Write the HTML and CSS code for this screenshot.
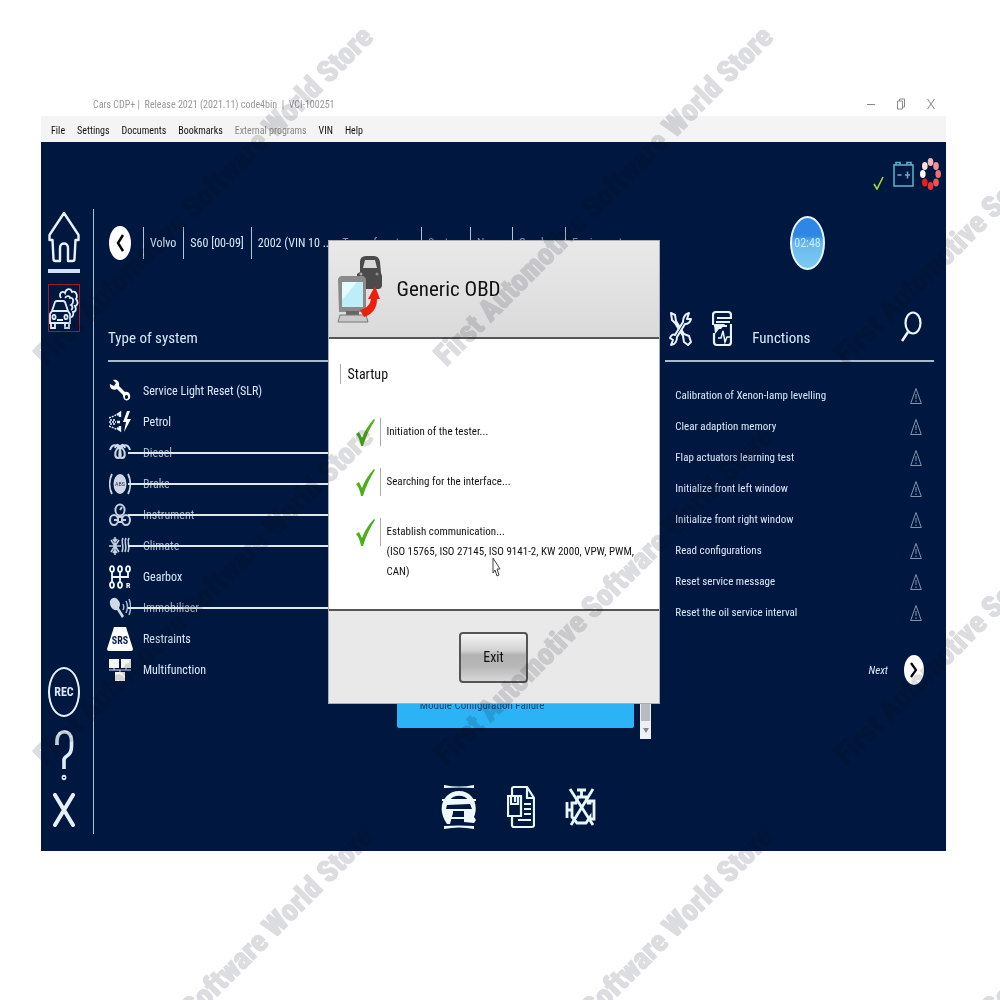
FILE: index.html
```html
<!DOCTYPE html>
<html lang="en">
<head>
  <meta charset="UTF-8">
  <meta name="viewport" content="width=device-width, initial-scale=1.0">
  <title>Cars CDP+</title>
  <link rel="stylesheet" href="styles.css">
</head>
<body>
  <div class="window">
    <header class="titlebar">
      <span class="title">Cars CDP+ |&nbsp; Release 2021 (2021.11) code4bin &nbsp;|&nbsp; VCI-100251</span>
      <div class="win-buttons">
        <button aria-label="Minimize"><svg width="8" height="12" viewBox="0 0 8 12"><path d="M0 6.500h8"/></svg></button>
        <button aria-label="Restore"><svg width="8" height="12" viewBox="0 0 8 12"><path d="M.5 3h5v8h-5zM2.500 3V1h5v8h-2"/></svg></button>
        <button aria-label="Close"><svg width="8" height="12" viewBox="0 0 8 12"><path d="M.5 1l7 10M7.500 1l-7 10"/></svg></button>
      </div>
    </header>

    <nav class="menubar">
      <a href="#">File</a>
      <a href="#">Settings</a>
      <a href="#">Documents</a>
      <a href="#">Bookmarks</a>
      <a href="#" class="off">External programs</a>
      <a href="#">VIN</a>
      <a href="#">Help</a>
    </nav>

    <main class="app">
      <div class="status">
        <svg class="ok" width="11" height="14" viewBox="0 0 11 14"><path d="M1 8l3 5L10 1" fill="none" stroke="#a4d63c" stroke-width="1.600"/></svg>
        <svg width="21" height="26" viewBox="0 0 21 26" fill="none" stroke="#5fb4cc" stroke-width="1.500"><path d="M1 4h19v21H1zM3 4V1.500h4V4M14 4V1.500h4V4M4.500 14h4M12 14h5M14.500 10.500v7"/></svg>
        <svg width="21" height="32" viewBox="0 0 21 32">
          <ellipse cx="10.500" cy="4" rx="2.800" ry="4" fill="#f6b5b5"/>
          <ellipse cx="16" cy="8" rx="2.800" ry="4" fill="#f19393"/>
          <ellipse cx="18.200" cy="16" rx="2.800" ry="4" fill="#ee7070"/>
          <ellipse cx="16" cy="24.500" rx="2.800" ry="4" fill="#ec5555"/>
          <ellipse cx="10.500" cy="28" rx="2.800" ry="4" fill="#ee3333"/>
          <ellipse cx="4.800" cy="24.500" rx="2.800" ry="4" fill="#f01c1c"/>
          <ellipse cx="2.800" cy="16" rx="2.800" ry="4" fill="#fff"/>
          <ellipse cx="4.800" cy="8" rx="2.800" ry="4" fill="#fbdede"/>
        </svg>
      </div>

      <div class="workspace">
        <aside class="rail">
          <button class="home" aria-label="Home"><svg width="32" height="52" viewBox="0 0 32 52" fill="none" stroke="#e8f3ff" stroke-width="2.400" stroke-linejoin="round" stroke-linecap="round"><path d="M16 2L1.500 24v5H4.500l1 19q0 2 2 2h4.500V37c0-6 8-6 8 0v13h4.500q2 0 2-2l1-19h3v-5z"/></svg></button>
          <button class="car" aria-label="Vehicle"><svg width="30" height="46" viewBox="0 0 30 46" fill="none" stroke="#dfeeff" stroke-width="1.800"><path d="M1 38V29l2-3 3-9q1-1 2-1h6q1 0 2 1l3 9 2 3v9zM3 26h16M2 38v5h4v-5M16 38v5h4v-5M8 35h6"/><ellipse cx="5" cy="32" rx="1.600" ry="2.200"/><ellipse cx="17" cy="32" rx="1.600" ry="2.200"/><path d="M12 13c-3-5 2-8 4-5 1-5 6-5 7-1 4-2 6 4 4 7 3 3 1 7-1 7 2 4 0 6-2 6 1 3-1 6-3 5M16 13c2-3 5-2 5 0 4-1 4 5 1 7 2 1 2 4 0 5"/></svg></button>
          <div class="rail-bottom">
            <button class="rec">REC</button>
            <button aria-label="Help"><svg width="20" height="52" viewBox="0 0 20 52" fill="none" stroke="#dfeefa" stroke-width="3.600"><path d="M3 16V11C4 0 17 0 17.500 11v6q0 7-4 9.500T10 32v8"/><ellipse cx="10" cy="48.500" rx=".6" ry="1" /></svg></button>
            <button aria-label="Exit"><svg width="22" height="34" viewBox="0 0 22 34" fill="none" stroke="#e4f1fb" stroke-width="4" stroke-linecap="round"><path d="M2 2l18 30M20 2L2 32"/></svg></button>
          </div>
        </aside>

        <div class="content">
          <div class="crumbs">
            <button class="round back" aria-label="Back"><svg width="8" height="18" viewBox="0 0 8 18"><path d="M7 1L2 9l5 8" fill="none" stroke="#000" stroke-width="2.400"/></svg></button>
            <span>Volvo</span>
            <span>S60 [00-09]</span>
            <span>2002 (VIN 10 ...</span>
            <span class="dim first">Type of system</span>
            <span class="dim">System</span>
            <span class="dim">Name</span>
            <span class="dim">Gearbox</span>
            <span class="dim">Equipment</span>
            <div class="clock">02:48</div>
          </div>

          <div class="columns">
            <section class="systems">
              <h2>Type of system</h2>
              <ul>
                <li><button><svg viewBox="0 0 22 24"><path d="M1 5l4 2 2-3-3-3c4-1 7 2 6 6l6 6c4-1 6 3 5 6s-5 3-6 1-1-3-1-4L8 10C4 12 0 9 1 5z" fill="#fff"/><ellipse cx="17.500" cy="18" rx="1.700" ry="2" fill="#001840"/></svg>Service Light Reset (SLR)</button></li>
                <li><button><svg viewBox="0 0 22 24" fill="none" stroke="#e8f5ff" stroke-width="1.800"><path d="M0 8l7-3M0 12h7M0 16l7 3M1 10h5M1 14h5" stroke-dasharray="2 1" stroke-width="1.400"/><path d="M8 5l3-2v4M8 12h3M8 18l3 2v-4" stroke-width="2.400"/><path d="M18 1l-4 11h3l-2 10 7-13h-4l3-8z" fill="#fff" stroke="none"/></svg>Petrol</button></li>
                <li class="disabled"><button disabled><svg viewBox="0 0 22 24" fill="none" stroke="#ccd6e4" stroke-width="2"><path d="M1 9c2-6 6-6 9-2 3 5 2 10-1 10s-4-5-1-9 3-4 6 0 2 9-1 9-4-5-1-10c3-4 7-4 9 2M6 7c1-4 3-4 5-1 2-3 4-3 5 1"/></svg>Diesel</button></li>
                <li class="disabled"><button disabled><svg viewBox="0 0 22 24"><path d="M3 2c-3 6-3 14 0 20M19 2c3 6 3 14 0 20" fill="none" stroke="#ccd6e4" stroke-width="1.800"/><ellipse cx="11" cy="12" rx="6.500" ry="10" fill="#cfd7e6"/><text x="11" y="14" font-size="6" text-anchor="middle" fill="#26365a">ABS</text></svg>Brake</button></li>
                <li class="disabled"><button disabled><svg viewBox="0 0 22 24" fill="none" stroke="#c5cfdf" stroke-width="2"><ellipse cx="11" cy="7" rx="4.600" ry="5.500"/><ellipse cx="5" cy="17" rx="4" ry="5"/><ellipse cx="17" cy="17" rx="4" ry="5"/><path d="M11 7l2-3M5 17h3M17 17h-3M9 14h4v5H9z"/></svg>Instrument</button></li>
                <li class="disabled"><button disabled><svg viewBox="0 0 22 24" fill="none" stroke="#c5cfdf" stroke-width="1.600"><path d="M6 3v18M0 12h12M2 6l8 12M10 6L2 18M4 5l2 3 2-3M4 19l2-3 2 3"/><path d="M14 4c-3 5 2 6-1 14M17 4c-3 5 2 6-1 14M20 4c-3 5 2 6-1 14"/></svg>Climate</button></li>
                <li><button><svg viewBox="0 0 22 24" fill="none" stroke="#f0f7ff" stroke-width="1.800"><path d="M3 6v12M11 6v12M19 6v6H3"/><g fill="#001840"><ellipse cx="3" cy="4" rx="2" ry="2.800"/><ellipse cx="11" cy="4" rx="2" ry="2.800"/><ellipse cx="19" cy="4" rx="2" ry="2.800"/><ellipse cx="3" cy="20" rx="2" ry="2.800"/><ellipse cx="11" cy="20" rx="2" ry="2.800"/></g><text x="17" y="23" font-size="8" font-weight="bold" fill="#fff" stroke="none">R</text></svg>Gearbox</button></li>
                <li class="disabled"><button disabled><svg viewBox="0 0 22 24"><path d="M1 5c2-4 6-4 8-1 3 3 2 6 1 8l5 8-2 2-5-8c-4 1-8-4-7-9z" fill="#cfd8e5"/><path d="M14 8c1 2 1 4 0 6M17 5c2 4 2 8 0 12M20 3c2 5 2 11 0 16" fill="none" stroke="#aab8cf" stroke-width="1.500"/></svg>Immobiliser</button></li>
                <li><button><svg viewBox="0 0 22 24" overflow="visible"><path d="M5 0h12l7 22q0 2-2 2H0q-2 0-2-2z" fill="#fff"/><text x="11" y="17" font-size="10" font-weight="bold" text-anchor="middle" fill="#001840">SRS</text></svg>Restraints</button></li>
                <li><button><svg viewBox="0 0 22 24"><path d="M0 1h10v9H0zM12 1h10v9H12zM6 14h10v9H6z" fill="#f3f5ee"/><path d="M0 12h22M11 12v4M5 10v2M17 10v2" stroke="#e7edf5" fill="none"/></svg>Multifunction</button></li>
              </ul>
            </section>

            <section class="modules">
              <div class="module-list">
                <button class="module">Module Configuration Failure</button>
                <div class="scroll"><span></span><svg width="6" height="5" viewBox="0 0 6 5"><path d="M0 0h6L3 5z" fill="#888"/></svg></div>
              </div>
              <div class="tools">
                <button aria-label="Scan vehicle"><svg width="36" height="44" viewBox="0 0 36 44" fill="#eef9fd"><path d="M3 0q15 3 30 0v3q-15-1-30 0zM3 41q15-1 30 0v3q-15-3-30 0z"/><path d="M6 39C-6 22 4 6 18 6s20 14 15 26l2 3-2 3-10-1V26H12v2L9 39zM8 16h20C24 9 12 9 8 16zM6 20l-1 4h26l-2-5z" fill-rule="evenodd"/><path d="M10 32h14v2H10zM1 14h34v2H1z"/></svg></button>
                <button aria-label="Save report"><svg width="28" height="44" viewBox="0 0 28 44" fill="none" stroke="#e8f7fb" stroke-width="2.200"><path d="M5 11V4q0-2 2-2h13l7 11v27q0 2-2 2H7q-2 0-2-2v-8M20 2v11h7"/><path d="M1 11h13v20H1zM4 11v8h7v-8M8 12v5M17 19h7M17 24h7M17 29h7M11 35h13"/></svg></button>
                <button aria-label="Clear fault codes"><svg width="32" height="40" viewBox="0 0 32 40" fill="none" stroke="#e8f7fb" stroke-width="2.800"><path d="M12 3h9M16.500 3v7M2 15v16M2 23h4M7 16h4l2-6h8l2 6h2v-2h4v18h-4v-2l-4 6H12l-5-6z"/><path d="M5 2l23 36M28 2L6 38"/></svg></button>
              </div>
            </section>

            <section class="functions">
              <div class="fn-head">
                <svg width="24" height="36" viewBox="0 0 24 36" fill="none" stroke="#e8f3ff" stroke-width="2" stroke-linejoin="round"><path d="M2 2l4 2 1 6 8 13 5 2 2 6-3 3-4-3-1-6L6 12 3 9z"/><path d="M22 8c-1 4-3 5-6 5L8 26c0 4-2 8-6 8l2-5-3-2c1-3 3-4 5-3l8-13c0-5 2-8 6-9l-2 6z" fill="#001840"/></svg>
                <svg width="20" height="36" viewBox="0 0 20 36" fill="none" stroke="#e8f3ff" stroke-width="2.200"><path d="M1 14V4q0-3 3-3h12q3 0 3 3v3H5M4 11h14M2 15h13M2 22v9q0 3 3 3h11q3 0 3-3V13"/><path d="M6 27h3l2-7 2 11 2-5h3" stroke-width="1.500"/><path d="M2 13h11l-4 5H7l-4 5z" fill="#e8f3ff" stroke="none"/></svg>
                <h2>Functions</h2>
                <button aria-label="Search"><svg width="21" height="32" viewBox="0 0 21 32" fill="none" stroke="#eef6ff" stroke-width="2.200"><ellipse cx="12" cy="12" rx="7.500" ry="10.500"/><path d="M7 21L1 30" stroke-width="2.600"/></svg></button>
              </div>
              <ul>
                <li><a href="#">Calibration of Xenon-lamp levelling</a><svg viewBox="0 0 12 18"><path d="M6 1.500L11.300 16.500H.7zM6 7v5M6 13.500v1.500"/></svg></li>
                <li><a href="#">Clear adaption memory</a><svg viewBox="0 0 12 18"><path d="M6 1.500L11.300 16.500H.7zM6 7v5M6 13.500v1.500"/></svg></li>
                <li><a href="#">Flap actuators learning test</a><svg viewBox="0 0 12 18"><path d="M6 1.500L11.300 16.500H.7zM6 7v5M6 13.500v1.500"/></svg></li>
                <li><a href="#">Initialize front left window</a><svg viewBox="0 0 12 18"><path d="M6 1.500L11.300 16.500H.7zM6 7v5M6 13.500v1.500"/></svg></li>
                <li><a href="#">Initialize front right window</a><svg viewBox="0 0 12 18"><path d="M6 1.500L11.300 16.500H.7zM6 7v5M6 13.500v1.500"/></svg></li>
                <li><a href="#">Read configurations</a><svg viewBox="0 0 12 18"><path d="M6 1.500L11.300 16.500H.7zM6 7v5M6 13.500v1.500"/></svg></li>
                <li><a href="#">Reset service message</a><svg viewBox="0 0 12 18"><path d="M6 1.500L11.300 16.500H.7zM6 7v5M6 13.500v1.500"/></svg></li>
                <li><a href="#">Reset the oil service interval</a><svg viewBox="0 0 12 18"><path d="M6 1.500L11.300 16.500H.7zM6 7v5M6 13.500v1.500"/></svg></li>
              </ul>
              <div class="next">
                <label for="next">Next</label>
                <button class="round" id="next"><svg width="8" height="16" viewBox="0 0 8 16"><path d="M1 1l5 7-5 7" fill="none" stroke="#000" stroke-width="2.200"/></svg></button>
              </div>
            </section>
          </div>
        </div>
      </div>

      <!-- startup dialog, lies over the columns -->
      <div class="dialog" role="dialog" aria-labelledby="dialog-title">
        <div class="dialog-head">
          <svg width="46" height="70" viewBox="0 0 46 70">
            <path d="M20 20l3-2V8q0-6 6-6h8q5 0 6 6l1 11 1 3v9q0 3-3 4H24q-4-1-4-4z" fill="#4b4b4b"/>
            <path d="M26 14l2-8h10l2 8z" fill="#d9d9d9"/>
            <circle cx="24" cy="20" r="1.500" fill="#aaa"/><circle cx="40" cy="20" r="1.500" fill="#888"/>
            <path d="M1 26q0-3 3-4h22q3 1 3 4v32H2z" fill="#8a8a8a"/>
            <path d="M5 28h21v25H5z" fill="#bdeef8"/><path d="M5 28h15L5 46z" fill="#e4fbff"/>
            <path d="M9 57h13v5H9z" fill="#666"/><path d="M3 61h26l2 7H1z" fill="#c9c9c9" stroke="#777"/>
            <path d="M38 32l5 13h-3c0 9-4 15-13 18l-4-7c7-2 10-5 11-11h-3z" fill="#e8200c"/>
          </svg>
          <h1 id="dialog-title">Generic OBD</h1>
        </div>
        <div class="dialog-body">
          <h3>Startup</h3>
          <ul class="steps">
            <li><svg width="20" height="28" viewBox="0 0 20 28"><path d="M0 16l3-2 3 6C9 12 13 6 18 1l1 1C14 10 10 18 7 28H5C4 22 2 18 0 16z" fill="#4fae1c"/></svg><p>Initiation of the tester...</p></li>
            <li><svg width="20" height="28" viewBox="0 0 20 28"><path d="M0 16l3-2 3 6C9 12 13 6 18 1l1 1C14 10 10 18 7 28H5C4 22 2 18 0 16z" fill="#4fae1c"/></svg><p>Searching for the interface...</p></li>
            <li><svg width="20" height="28" viewBox="0 0 20 28"><path d="M0 16l3-2 3 6C9 12 13 6 18 1l1 1C14 10 10 18 7 28H5C4 22 2 18 0 16z" fill="#4fae1c"/></svg><p>Establish communication...<br>(ISO 15765, ISO 27145, ISO 9141-2, KW 2000, VPW, PWM,<br>CAN)</p></li>
          </ul>
        </div>
        <div class="dialog-foot"><button>Exit</button></div>
        <svg class="cursor" width="9" height="20" viewBox="0 0 9 20"><path d="M1 1v15l2-3 2 6 2-1-2-6h3z" fill="#fff" stroke="#444"/></svg>
      </div>
    </main>
  </div>

  <div class="watermarks" aria-hidden="true">
    <span>First Automotive Software World Store</span>
    <span>First Automotive Software World Store</span>
    <span>First Automotive Software World Store</span>
    <span>First Automotive Software World Store</span>
    <span>First Automotive Software World Store</span>
    <span>First Automotive Software World Store</span>
    <span>First Automotive Software World Store</span>
    <span>First Automotive Software World Store</span>
    <span>First Automotive Software World Store</span>
  </div>
</body>
</html>
```
FILE: styles.css
```css
* {
  box-sizing: border-box;
}

body {
  margin: 0;
  min-height: 100vh;
  position: relative;
  overflow: hidden;
  background: #fff;
  font-family: "Roboto Condensed", "Liberation Sans Narrow", "Liberation Sans", sans-serif;
  font-size: 12px;
  color: #111;
}

h1,
h2,
h3,
p,
ul {
  margin: 0;
  padding: 0;
  font-weight: normal;
  list-style: none;
}

button {
  padding: 0;
  border: none;
  background: none;
  font: inherit;
  color: inherit;
  cursor: pointer;
}

a {
  color: inherit;
  text-decoration: none;
}

svg {
  display: block;
  flex-shrink: 0;
}

.window {
  padding: 92px 54px 0 41px;
}

.titlebar {
  display: flex;
  justify-content: space-between;
  align-items: center;
  height: 24px;
  padding: 0 11px 0 52px;
  font-size: 10px;
  color: #999;
}

.win-buttons {
  display: flex;
  gap: 22px;
}

.win-buttons svg {
  fill: none;
  stroke: #888;
}

.menubar {
  display: flex;
  align-items: center;
  gap: 12px;
  height: 26px;
  padding: 2px 0 0 10px;
  background: #f4f4f4;
  font-size: 10px;
}

.menubar .off {
  color: #888;
}

.app {
  position: relative;
  padding: 16px 12px 17px 0;
  background: #001840;
  color: #dbe8f8;
}

.status {
  display: flex;
  justify-content: flex-end;
  align-items: center;
  gap: 6px;
  height: 32px;
  margin-right: -7px;
}

.status .ok {
  align-self: flex-end;
  margin-right: 3px;
}

.workspace {
  display: flex;
  margin-top: 19px;
}

.rail {
  display: flex;
  flex-direction: column;
  align-items: center;
  width: 53px;
  padding: 2px 13px 7px 7px;
  border-right: 1px solid #aebfd3;
}

.home {
  padding-bottom: 6px;
  border-bottom: 4px solid #cfe2f7;
}

.car {
  margin-top: 11px;
  border: 1px solid #a01c2c;
}

.rail-bottom {
  display: flex;
  flex-direction: column;
  align-items: center;
  gap: 12px;
  margin-top: auto;
}

.rec {
  width: 32px;
  height: 50px;
  border: 2px solid #e4f1fb;
  border-radius: 50%;
  font-size: 12px;
  font-weight: bold;
}

.content {
  flex: 1;
  padding: 7px 0 0 14px;
}

.crumbs {
  display: flex;
  align-items: center;
  height: 54px;
  font-size: 12px;
  white-space: nowrap;
}

.crumbs span {
  height: 32px;
  padding: 0 7px 0 6px;
  border-left: 1px solid #b4c4d8;
  line-height: 32px;
}

.crumbs .dim {
  color: #8390a8;
}

.crumbs .dim.first {
  padding-left: 2px;
  border-color: transparent;
}

.round {
  display: grid;
  place-items: center;
  width: 20px;
  height: 30px;
  border-radius: 50%;
  background: #fff;
}

.back {
  width: 22px;
  height: 34px;
  margin: 0 12px 0 1px;
}

.clock {
  width: 35px;
  height: 54px;
  margin: 0 109px 0 auto;
  border: 2px solid #e6f5ff;
  border-radius: 50%;
  background: linear-gradient(#2f86e4 35%, #67b9ef 50%, #7cc9f3);
  font-size: 12px;
  line-height: 50px;
  text-align: center;
  color: #c9ebff;
}

.columns {
  display: grid;
  grid-template-columns: 222fr 336fr 269fr;
  margin-top: 36px;
}

h2 {
  font-size: 15px;
  line-height: 22px;
}

.systems h2 {
  height: 56px;
  padding-top: 21px;
  border-bottom: 2px solid #a9bad0;
}

.systems ul {
  padding-top: 13px;
}

.systems li {
  position: relative;
}

.systems button {
  display: flex;
  align-items: center;
  gap: 12px;
  height: 31px;
  padding-left: 1px;
  font-size: 12px;
}

.systems svg {
  width: 22px;
  height: 24px;
}

.disabled button {
  color: #a9b6ca;
}

/* line through the systems that are not fitted */
.disabled::after {
  content: "";
  position: absolute;
  left: 20px;
  right: 0;
  top: 15px;
  height: 2px;
  background: #dfe7ef;
}

.modules {
  padding-top: 377px;
}

.module-list {
  display: flex;
  align-items: flex-start;
  gap: 6px;
  padding: 0 14px 0 67px;
}

.module {
  flex: 1;
  height: 45px;
  padding-left: 23px;
  border-radius: 2px;
  background: #2bb3f5;
  font-size: 11px;
  text-align: left;
  color: #17436f;
}

.scroll {
  display: flex;
  flex-direction: column;
  align-items: center;
  justify-content: space-between;
  width: 11px;
  height: 56px;
  padding-bottom: 6px;
  background: #eef0f3;
}

.scroll span {
  width: 9px;
  height: 38px;
  background: #b8bcc2;
}

.tools {
  display: flex;
  align-items: center;
  gap: 30px;
  margin-top: 46px;
  padding: 0 0 5px 111px;
}

.fn-head {
  display: flex;
  align-items: flex-start;
  height: 56px;
  padding: 5px 12px 0 4px;
  border-bottom: 2px solid #a9bad0;
}

.fn-head svg + svg {
  margin-left: 19px;
}

.fn-head h2 {
  margin-left: 20px;
  padding-top: 16px;
}

.fn-head button {
  margin-left: auto;
}

.functions ul {
  padding: 18px 12px 0 10px;
}

.functions li {
  display: flex;
  align-items: center;
  justify-content: space-between;
  height: 31px;
  font-size: 11px;
}

.functions li svg {
  width: 12px;
  height: 18px;
  fill: none;
  stroke: #8593a8;
}

.next {
  display: flex;
  align-items: center;
  justify-content: flex-end;
  gap: 16px;
  margin-top: 27px;
  padding-right: 10px;
  font-size: 11px;
  font-style: italic;
}

.dialog {
  position: absolute;
  top: 98px;
  left: 50%;
  width: 332px;
  transform: translateX(-50%);
  border: 1px solid #a9adb4;
  background: #fff;
  color: #111;
}

.dialog-head {
  display: flex;
  align-items: center;
  gap: 14px;
  height: 98px;
  padding-left: 8px;
  border-bottom: 2px solid #555;
  background: linear-gradient(#e9e9ea, #dadada);
}

h1 {
  font-size: 21px;
}

.dialog-body {
  height: 270px;
  padding: 25px 14px 0 11px;
}

h3 {
  padding-left: 7px;
  border-left: 1px solid #aaa;
  font-size: 14px;
  line-height: 20px;
}

.steps {
  display: grid;
  gap: 22px;
  padding: 34px 0 0 16px;
}

.steps li {
  display: flex;
  align-items: flex-start;
  gap: 4px;
  min-height: 28px;
}

.steps p {
  min-height: 28px;
  padding: 4px 0 0 7px;
  font-size: 11px;
  line-height: 20px;
  background: linear-gradient(#aaa, #aaa) no-repeat left top / 1px 28px;
}

.dialog-foot {
  display: grid;
  place-items: center;
  height: 94px;
  border-top: 2px solid #555;
  background: #e9e9e9;
}

.dialog-foot button {
  width: 69px;
  height: 51px;
  border: 2px solid #555;
  border-radius: 4px;
  background: linear-gradient(#f4f4f4, #d2d2d2 35%, #b2b2b2 45%, #b8b8b8 70%, #d8d8d8);
  font-size: 14px;
}

.cursor {
  position: absolute;
  left: 163px;
  top: 316px;
}

.watermarks {
  position: absolute;
  inset: -5px 0 0 3px;
  display: grid;
  grid-template-columns: repeat(3, 400px);
  grid-auto-rows: 400px;
  place-items: center;
  overflow: hidden;
  pointer-events: none;
  font-size: 30px;
  font-weight: 900;
  color: #dcdde0;
  mix-blend-mode: multiply;
  -webkit-text-stroke: 1px #dcdde0;
}

.watermarks span {
  white-space: nowrap;
  transform: rotate(-45deg);
}
```
